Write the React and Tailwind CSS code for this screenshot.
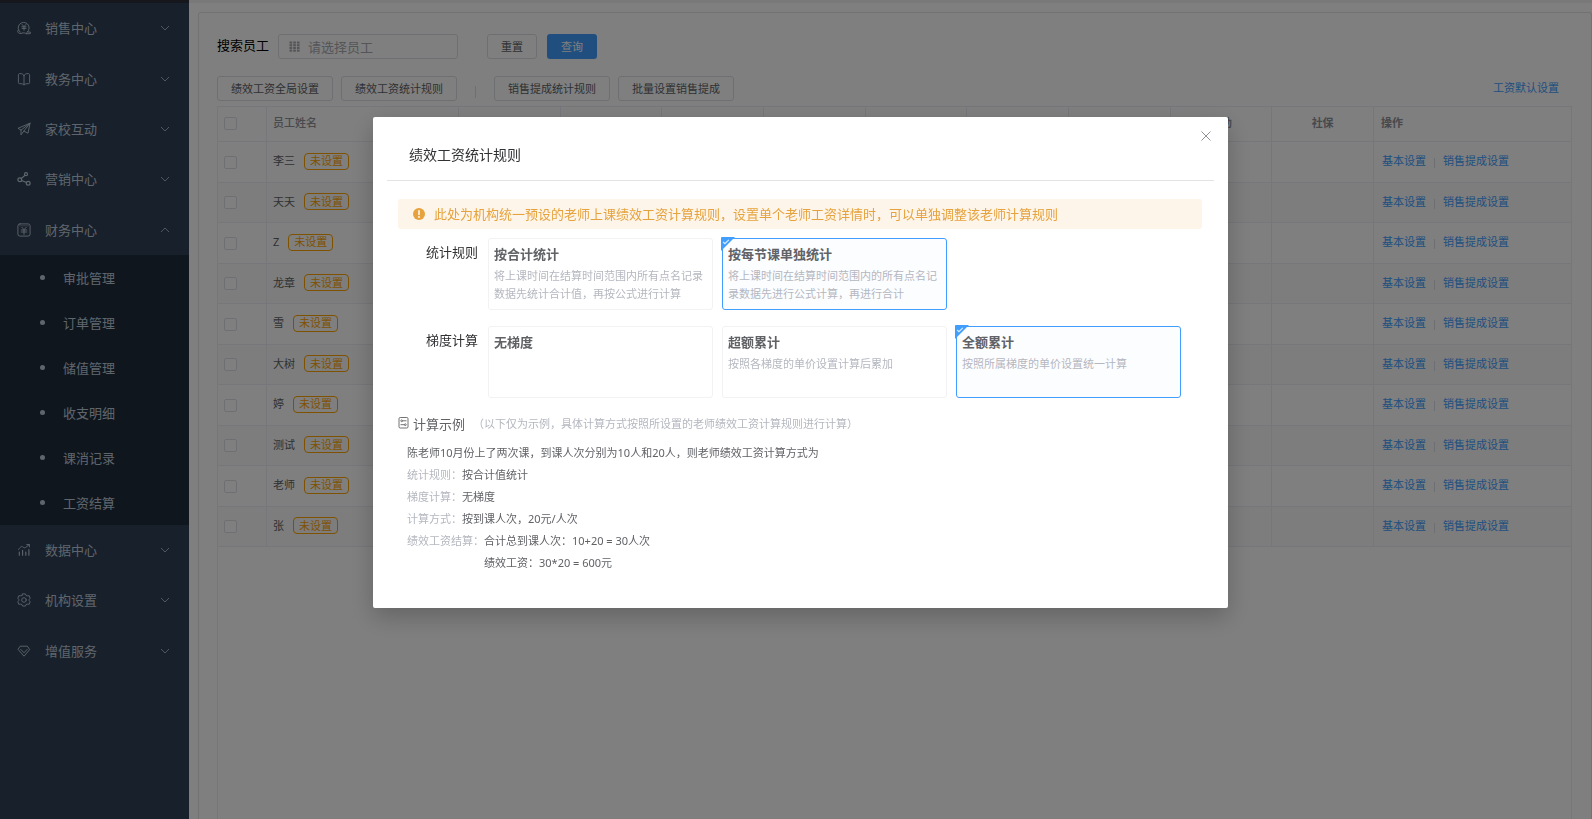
import React from "react";

const svgBase = {
  viewBox: "0 0 14 14",
  fill: "none",
  stroke: "currentColor",
  strokeLinecap: "round",
  strokeLinejoin: "round",
  "aria-hidden": true,
};

function Icon({ children, width = 0.9 }) {
  return (
    <svg {...svgBase} strokeWidth={width} className="h-3.5 w-3.5 shrink-0">
      {children}
    </svg>
  );
}

const icons = {
  sales: (
    <Icon>
      <path d="M3.200 11.200A5.500 5.500 0 1 1 10.400 11" />
      <path d="M10.400 11c-.6.500-1 .9-1 1.700H13.300v-1.700H11" />
      <path d="M1.300 9c-.8.8-.8 2 0 2.700 1 .9 2.500 1 3.700.5 1.300-.6 2.600-.5 4.400.5" />
      <path d="M5.100 3.500l1.900 2.100 1.900-2.100M4.900 5.800h4.200M5.100 7.400h3.800M7 5.800v3.300" />
    </Icon>
  ),
  teaching: (
    <Icon>
      <path d="M7 3.400C6.400 2.200 5 1.600 3 1.600c-1 0-1.600.5-1.600 1.500v7.400c0 .8.500 1.200 1.300 1.200 2 0 3.500.1 4.300 1M7 3.400C7.600 2.200 9 1.600 11 1.600c1 0 1.600.5 1.600 1.500v7.400c0 .8-.5 1.200-1.300 1.200-2 0-3.500.1-4.300 1M7 3.400v9.300" />
    </Icon>
  ),
  school: (
    <Icon>
      <path d="M13 1.200L1 6.300l3 1.800 9-6.900-2 10-4.200-2.100L13 1.200M4 8.100v4.700l2.800-3.700" />
    </Icon>
  ),
  marketing: (
    <Icon width={1.2}>
      <circle cx="2.800" cy="7.800" r="1.900" />
      <circle cx="9" cy="2.200" r="1.500" />
      <circle cx="11.200" cy="11.300" r="1.900" />
      <path d="M4.200 6.500L8 3.400M4.600 8.500l4.900 2" />
    </Icon>
  ),
  finance: (
    <Icon>
      <rect x="0.900" y="0.900" width="12.200" height="12.200" rx="2" />
      <path d="M2.500 2.800h9" opacity=".5" />
      <path d="M4.800 4.300L7 6.600l2.200-2.300M4.200 7h5.600M4.200 9h5.600M7 6.600v4.800" />
    </Icon>
  ),
  data: (
    <Icon>
      <path d="M1.600 6.500C3.500 3.600 5 3 6 4s2 1.200 3.200 0l3-2.400M9.800 1.500h2.600v2.400" />
      <path d="M2.300 12.300V9M5.600 12.300V7.200M8.800 12.300V9M11.900 12.300V6.500" strokeWidth="1.100" />
    </Icon>
  ),
  settings: (
    <Icon>
      <circle cx="7" cy="7" r="2.300" />
      <path d="M5.600.9h2.800l.7 1.700 1.700.3 1.400-.2 1 2.500-1 1.100v1.400l1 1.100-1 2.500-1.400-.2-1.700.3-.7 1.700H5.600l-.7-1.700-1.700-.3-1.400.2-1-2.500 1-1.100V6.300l-1-1.100 1-2.500 1.400.2 1.700-.3z" />
    </Icon>
  ),
  vip: (
    <Icon>
      <path d="M3.600 2.200h6.800l2.300 3.400L7 12.200 1.300 5.600z" />
      <path d="M3.800 5.400L7 8.800l3.200-3.400" />
    </Icon>
  ),
};

const topMenu = [
  { label: "销售中心", icon: icons.sales },
  { label: "教务中心", icon: icons.teaching },
  { label: "家校互动", icon: icons.school },
  { label: "营销中心", icon: icons.marketing },
  { label: "财务中心", icon: icons.finance, open: true },
];
const financeMenu = ["审批管理", "订单管理", "储值管理", "收支明细", "课消记录", "工资结算"];
const bottomMenu = [
  { label: "数据中心", icon: icons.data },
  { label: "机构设置", icon: icons.settings },
  { label: "增值服务", icon: icons.vip },
];

function MenuItem({ item }) {
  return (
    <button type="button" aria-expanded={!!item.open} className="flex w-full items-center pl-[17px] pr-[19px] text-left text-[13px] leading-5">
      {item.icon}
      <span className="ml-3.5 flex-1">{item.label}</span>
      <svg viewBox="0 0 10 6" fill="none" stroke="currentColor" strokeWidth=".8" aria-hidden="true" className="h-1.5 w-2.5">
        <path d={item.open ? "M1 5l4-4 4 4" : "M1 1l4 4 4-4"} />
      </svg>
    </button>
  );
}

function Sidebar() {
  return (
    <nav className="flex w-[189px] shrink-0 flex-col border-t-[3px] border-[#2b2f3a] bg-[#304156] text-[#bfcbd9]">
      <div className="grid h-[252px] grid-rows-5">
        {topMenu.map((m) => <MenuItem key={m.label} item={m} />)}
      </div>
      <ul className="bg-[#1f2d3d]">
        {financeMenu.map((label) => (
          <li key={label}>
            <a href="#" className="flex h-[45px] items-center pl-10 text-[13px] leading-5">
              <span className="h-[5px] w-[5px] rounded-full bg-[#bfcbd9]" />
              <span className="ml-[18px]">{label}</span>
            </a>
          </li>
        ))}
      </ul>
      <div className="grid h-[151px] grid-rows-3">
        {bottomMenu.map((m) => <MenuItem key={m.label} item={m} />)}
      </div>
    </nav>
  );
}

const plainButton = "h-[25px] rounded-[3px] border border-[#dcdfe6] bg-white px-[13px] text-[11px] leading-4 text-[#606266]";

function CheckBox({ label }) {
  return (
    <input type="checkbox" aria-label={label} className="block h-[13px] w-[13px] appearance-none rounded-[2px] border border-[#dcdfe6] bg-white" />
  );
}

const staff = ["李三", "天天", "Z", "龙章", "雪", "大树", "婷", "测试", "老师", "张"];
const salaryColumns = ["", "", "", "", "", "", "", "补助", "社保"];
const cell = "border-b border-r border-[#ebeef5] p-0";

function StaffTable() {
  return (
    <div className="flex-1 border border-b-0 border-[#ebeef5]">
      <table className="w-full table-fixed border-separate border-spacing-0 text-[11px] leading-4 text-[#606266]">
        <colgroup>
          <col className="w-[49px]" />
          <col className="w-[192px]" />
          {salaryColumns.map((_, i) => <col key={i} />)}
          <col className="w-[197px]" />
        </colgroup>
        <thead>
          <tr className="h-[35px] text-[#909399]">
            <th className={cell + " pb-0.5 pl-1.5"}><CheckBox label="全选" /></th>
            <th className={cell + " pb-0.5 pl-1.5 text-left font-medium"}>员工姓名</th>
            {salaryColumns.map((c, i) => <th key={i} className={cell + " pb-0.5 text-center font-bold"}>{c}</th>)}
            <th className="border-b border-[#ebeef5] p-0 pb-0.5 pl-[7px] text-left font-bold">操作</th>
          </tr>
        </thead>
        <tbody>
          {staff.map((name) => (
            <tr key={name} className="odd:h-[41px] even:h-[40px] even:bg-[#fafafa]">
              <td className={cell + " pl-1.5"}><CheckBox label={name} /></td>
              <td className={cell + " pb-0.5 pl-1.5"}>
                <div className="flex items-center gap-[9px]">
                  <span>{name}</span>
                  <span className="flex h-[17px] items-center rounded-[4px] border border-[#ffa500] px-[5px] text-[#ffa500]">未设置</span>
                </div>
              </td>
              {salaryColumns.map((_, i) => <td key={i} className={cell} />)}
              <td className="border-b border-[#ebeef5] p-0 pb-0.5 pl-2">
                <div className="flex items-center gap-2 text-[#409eff]">
                  <a href="#">基本设置</a>
                  <span className="mt-1 h-2.5 w-px bg-[#dcdfe6]" />
                  <a href="#">销售提成设置</a>
                </div>
              </td>
            </tr>
          ))}
        </tbody>
      </table>
    </div>
  );
}

function Page() {
  return (
    <main className="flex min-w-0 flex-1 flex-col border-t-[3px] border-[#f3f3f3] bg-white pl-[9px] pt-[9px]">
      <div className="flex flex-1 flex-col rounded-t-[3px] border border-b-0 border-[#e4e4e8] pl-[18px] pr-[19px] pt-[21px]">
        <div className="flex items-center">
          <label htmlFor="staff-search" className="pb-[3px] text-[13px] leading-5 text-black">搜索员工</label>
          <div className="ml-[9px] flex h-[25px] w-[180px] items-center rounded-[3px] border border-[#dcdfe6] pl-2.5">
            <svg viewBox="0 0 11 11" fill="#a8abb2" aria-hidden="true" className="h-[11px] w-[11px] shrink-0">
              {[0.5, 4.2, 7.9].map((x) => [0.5, 3.2, 5.9, 8.6].map((y) => <rect key={x + "-" + y} x={x} y={y} width="2.700" height="2.100" />))}
            </svg>
            <input id="staff-search" placeholder="请选择员工" className="ml-2 w-full min-w-0 bg-transparent text-[13px] leading-5 outline-none placeholder:text-[#a8abb2]" />
          </div>
          <button type="button" className={plainButton + " ml-[29px]"}>重置</button>
          <button type="button" className="ml-2.5 h-[25px] rounded-[3px] bg-[#409eff] px-3.5 text-[11px] leading-4 text-white">查询</button>
        </div>
        <div className="mt-[17px] flex items-center">
          <button type="button" className={plainButton}>绩效工资全局设置</button>
          <button type="button" className={plainButton + " ml-2"}>绩效工资统计规则</button>
          <span className="mt-1.5 ml-[18px] h-3 w-px bg-[#dcdfe6]" />
          <button type="button" className={plainButton + " ml-[18px]"}>销售提成统计规则</button>
          <button type="button" className={plainButton + " ml-2"}>批量设置销售提成</button>
          <a href="#" className="ml-auto mr-[13px] pb-0.5 text-[11px] leading-4 text-[#409eff]">工资默认设置</a>
        </div>
        <div className="mt-[5px] flex flex-1 flex-col">
          <StaffTable />
        </div>
      </div>
    </main>
  );
}

function OptionCard({ group, title, desc, checked }) {
  return (
    <label className="relative block h-[72px] w-[225px] rounded-[3px] border border-[#f2f2f4] px-[5px] pt-[5px] has-checked:border-[#409eff] has-checked:bg-[#fcfdff]">
      <input type="radio" name={group} defaultChecked={checked} className="peer sr-only" />
      <svg viewBox="0 0 14 14" aria-hidden="true" className="absolute -left-0.5 -top-0.5 hidden h-3.5 w-3.5 peer-checked:block">
        <path d="M0 1a1 1 0 0 1 1-1h13L0 14z" fill="#409eff" />
        <path d="M2.200 5l1.700 1.700L7.800 2.800" fill="none" stroke="#d9ecff" strokeWidth="1.200" />
      </svg>
      <span className="block text-[13px] font-bold leading-5 text-[#606266]">{title}</span>
      <span className="mt-[3px] block text-[11px] leading-[18px] text-[#b4b7bf]">{desc}</span>
    </label>
  );
}

function OptionRow({ label, name, options }) {
  return (
    <div role="radiogroup" aria-label={label} className="flex">
      <span className="mt-1 mr-2.5 w-[52px] text-[13px] leading-5 text-[#303133]">{label}</span>
      <div className="flex gap-[9px]">
        {options.map((o) => <OptionCard key={o.title} group={name} {...o} />)}
      </div>
    </div>
  );
}

const statOptions = [
  { title: "按合计统计", desc: "将上课时间在结算时间范围内所有点名记录数据先统计合计值，再按公式进行计算" },
  { title: "按每节课单独统计", desc: "将上课时间在结算时间范围内的所有点名记录数据先进行公式计算，再进行合计", checked: true },
];
const tierOptions = [
  { title: "无梯度", desc: "" },
  { title: "超额累计", desc: "按照各梯度的单价设置计算后累加" },
  { title: "全额累计", desc: "按照所属梯度的单价设置统一计算", checked: true },
];
const exampleRows = [
  ["统计规则：", ["按合计值统计"]],
  ["梯度计算：", ["无梯度"]],
  ["计算方式：", ["按到课人次，20元/人次"]],
  ["绩效工资结算：", ["合计总到课人次：10+20 = 30人次", "绩效工资：30*20 = 600元"]],
];

function RulesDialog() {
  return (
    <section role="dialog" aria-modal="true" aria-labelledby="rules-title" className="relative w-[855px] max-w-full rounded-[2px] bg-white px-3.5 pb-[34px] shadow-[0_9px_25px_rgba(0,0,0,0.22)]">
      <button type="button" aria-label="关闭" className="absolute right-4 top-[13px] text-[#909399]">
        <svg viewBox="0 0 12 12" stroke="currentColor" aria-hidden="true" className="h-3 w-3">
          <path d="M1.500 1.500l9 9M10.500 1.500l-9 9" />
        </svg>
      </button>
      <header className="border-b border-[#e4e4e6] pb-[15px] pl-[22px] pt-[27px]">
        <h2 id="rules-title" className="text-[14px] leading-[21px] text-[#303133]">绩效工资统计规则</h2>
      </header>
      <div className="pl-[11px] pr-3 pt-[18px]">
        <div role="alert" className="flex h-[30px] items-center rounded-[3px] bg-[#fef5ea] pl-[15px] text-[#e6a23c]">
          <svg viewBox="0 0 12 12" aria-hidden="true" className="h-3 w-3">
            <circle cx="6" cy="6" r="6" fill="currentColor" />
            <path d="M6 2.800v3.700" stroke="#fff" strokeWidth="1.500" strokeLinecap="round" />
            <circle cx="6" cy="9" r="0.900" fill="#fff" />
          </svg>
          <p className="ml-[9px] text-[13px] leading-5">此处为机构统一预设的老师上课绩效工资计算规则，设置单个老师工资详情时，可以单独调整该老师计算规则</p>
        </div>
        <div className="mt-[9px] flex flex-col gap-4 pl-7">
          <OptionRow label="统计规则" name="stat" options={statOptions} />
          <OptionRow label="梯度计算" name="tier" options={tierOptions} />
        </div>
        <div className="mt-4 flex items-center text-[#606266]">
          <svg viewBox="0 0 11 12" fill="none" stroke="currentColor" strokeWidth=".9" aria-hidden="true" className="mb-0.5 h-3 w-[11px]">
            <rect x="1" y="0.500" width="9" height="10.500" rx="1.200" />
            <circle cx="3.700" cy="3.800" r="0.900" />
            <circle cx="7.300" cy="7.700" r="0.900" />
            <path d="M4.700 3.800H8.500M2.500 7.700h3.800" />
          </svg>
          <h3 className="ml-1 text-[13px] leading-5">计算示例</h3>
          <span className="ml-2 text-[11px] leading-4 text-[#b4b7bf]">（以下仅为示例，具体计算方式按照所设置的老师绩效工资计算规则进行计算）</span>
        </div>
        <div className="mt-2 pl-[9px] text-[11px] leading-[22px] text-[#606266]">
          <p>陈老师10月份上了两次课，到课人次分别为10人和20人，则老师绩效工资计算方式为</p>
          {exampleRows.map(([label, lines]) => (
            <div key={label} className="flex">
              <span className="text-[#b4b7bf]">{label}</span>
              <div>{lines.map((l) => <p key={l}>{l}</p>)}</div>
            </div>
          ))}
        </div>
      </div>
    </section>
  );
}

export default function App() {
  return (
    <div className="relative flex h-screen overflow-hidden font-['Noto_Sans','Noto_Sans_CJK_SC',sans-serif]">
      <Sidebar />
      <Page />
      <div className="fixed inset-0 flex items-start justify-center bg-black/50 pl-[9px] pt-[117px]">
        <RulesDialog />
      </div>
    </div>
  );
}
